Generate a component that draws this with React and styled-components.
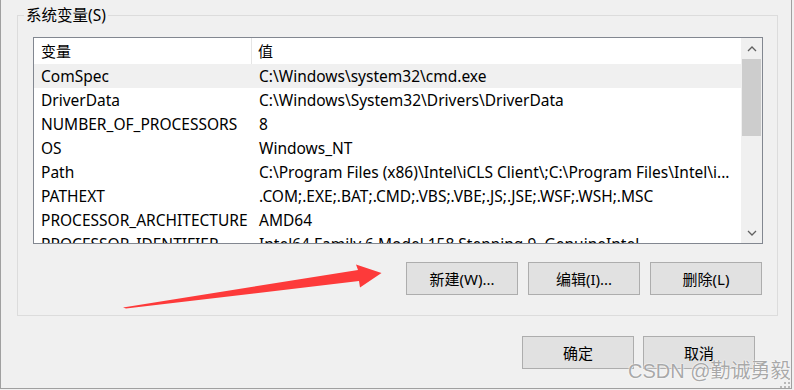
import React from 'react';
import styled, { createGlobalStyle } from 'styled-components';

const rows = [
  { name: 'ComSpec', value: 'C:\\Windows\\system32\\cmd.exe', hot: true },
  { name: 'DriverData', value: 'C:\\Windows\\System32\\Drivers\\DriverData' },
  { name: 'NUMBER_OF_PROCESSORS', value: '8' },
  { name: 'OS', value: 'Windows_NT' },
  { name: 'Path', value: 'C:\\Program Files (x86)\\Intel\\iCLS Client\\;C:\\Program Files\\Intel\\i...' },
  { name: 'PATHEXT', value: '.COM;.EXE;.BAT;.CMD;.VBS;.VBE;.JS;.JSE;.WSF;.WSH;.MSC' },
  { name: 'PROCESSOR_ARCHITECTURE', value: 'AMD64' },
  { name: 'PROCESSOR_IDENTIFIER', value: 'Intel64 Family 6 Model 158 Stepping 9, GenuineIntel' },
];

function App() {
  return (
    <>
      <GlobalStyle />
      <Window>
        <Group>
          <Legend>系统变量(S)</Legend>
          <ListBox>
            <ListContent>
              <HeaderRow>
                <HeaderCell divider>变量</HeaderCell>
                <HeaderCell>值</HeaderCell>
              </HeaderRow>
              {rows.map((r) => (
                <Row key={r.name} hot={r.hot}>
                  <Cell>{r.name}</Cell>
                  <Cell>{r.value}</Cell>
                </Row>
              ))}
            </ListContent>
            <ScrollBar>
              <ArrowBox>
                <svg width="10" height="6" viewBox="0 0 10 6">
                  <polyline points="1,5 5,1 9,5" fill="none" stroke="#606060" strokeWidth="1.3" />
                </svg>
              </ArrowBox>
              <Thumb />
              <Track />
              <ArrowBox>
                <svg width="10" height="6" viewBox="0 0 10 6">
                  <polyline points="1,1 5,5 9,1" fill="none" stroke="#606060" strokeWidth="1.3" />
                </svg>
              </ArrowBox>
            </ScrollBar>
          </ListBox>
          <ButtonRow>
            <Button>新建(W)...</Button>
            <Button>编辑(I)...</Button>
            <Button>删除(L)</Button>
          </ButtonRow>
        </Group>
        <DialogButtons>
          <Button>确定</Button>
          <Button>取消</Button>
        </DialogButtons>

        {/* red annotation arrow drawn over the dialog */}
        <Arrow width="794" height="390" viewBox="0 0 794 390">
          <polygon points="123,307.5 358,270 356,264.5 381.5,273 360,287.5 359,281 126,308.5" fill="#fd3a3a" />
        </Arrow>
        <Watermark>CSDN @勤诚勇毅</Watermark>
        <Grip width="12" height="10" viewBox="0 0 12 10">
          <rect x="9" y="0" width="2" height="2" fill="#b8b8b8" />
          <rect x="5" y="4" width="2" height="2" fill="#b8b8b8" />
          <rect x="9" y="4" width="2" height="2" fill="#b8b8b8" />
          <rect x="1" y="8" width="2" height="2" fill="#b8b8b8" />
          <rect x="5" y="8" width="2" height="2" fill="#b8b8b8" />
          <rect x="9" y="8" width="2" height="2" fill="#b8b8b8" />
        </Grip>
      </Window>
    </>
  );
}

const GlobalStyle = createGlobalStyle`
  html, body {
    margin: 0;
    padding: 0;
    background: #f0f0f0;
  }
  body {
    font-family: "Noto Sans", "Noto Sans CJK SC", sans-serif;
    font-size: 15px;
    color: #000;
  }
`;

const Window = styled.div`
  position: relative;
  box-sizing: border-box;
  width: 792px;
  height: 389px;
  padding: 5px 0 0 16px;
  background: #f0f0f0;
  border-left: 1px solid #a0a0a0;
  border-right: 1px solid #a0a0a0;
  border-bottom: 1px solid #a0a0a0;
  overflow: hidden;
`;

const Group = styled.fieldset`
  box-sizing: border-box;
  width: 761px;
  margin: 0;
  padding: 12px 14px 20px 15px;
  border: 1px solid #dcdcdc;
  min-width: 0;
`;

const Legend = styled.legend`
  margin-left: -9px;
  padding: 0 2px;
  line-height: 20px;
  font-size: 15.5px;
`;

const ListBox = styled.div`
  display: flex;
  box-sizing: border-box;
  width: 730px;
  height: 207px;
  border: 1px solid #828790;
  background: #fff;
  overflow: hidden;
`;

const ListContent = styled.div`
  flex: 1;
  min-width: 0;
  overflow: hidden;
  font-size: 15.5px;
`;

const HeaderRow = styled.div`
  display: grid;
  grid-template-columns: 218px 1fr;
  height: 26px;
`;

const HeaderCell = styled.div`
  display: flex;
  align-items: center;
  padding-left: ${(p) => (p.divider ? '7px' : '6px')};
  border-right: ${(p) => (p.divider ? '1px solid #e5e5e5' : 'none')};
  line-height: 20px;
  font-size: 15px;
`;

const Row = styled.div`
  display: grid;
  grid-template-columns: 218px 1fr;
  height: 24px;
  align-items: center;
  background: ${(p) => (p.hot ? '#f0f0f0' : '#fff')};
`;

const Cell = styled.div`
  padding-left: 7px;
  white-space: nowrap;
  overflow: hidden;
  line-height: 20px;
`;

const ScrollBar = styled.div`
  display: flex;
  flex-direction: column;
  width: 21px;
  background: #f0f0f0;
`;

const ArrowBox = styled.div`
  display: flex;
  align-items: center;
  justify-content: center;
  height: 21px;
`;

const Thumb = styled.div`
  height: 77px;
  margin: 0 1px;
  background: #cdcdcd;
`;

const Track = styled.div`
  flex: 1;
`;

const ButtonRow = styled.div`
  display: flex;
  justify-content: flex-end;
  gap: 10px;
  width: 729px;
  margin-top: 18px;
`;

const DialogButtons = styled.div`
  display: flex;
  justify-content: flex-end;
  gap: 9px;
  width: 738px;
  margin-top: 20px;
`;

const Button = styled.div`
  box-sizing: border-box;
  display: flex;
  align-items: center;
  justify-content: center;
  width: 112px;
  height: 33px;
  background: #e1e1e1;
  border: 1px solid #adadad;
  font-size: 15px;
  line-height: 20px;
`;

const Arrow = styled.svg`
  position: absolute;
  left: -1px;
  top: 0;
  pointer-events: none;
`;

const Watermark = styled.div`
  position: absolute;
  left: 627px;
  top: 360px;
  font-family: "Liberation Sans", "Noto Sans CJK SC", sans-serif;
  font-size: 20px;
  line-height: 22px;
  color: rgba(140, 140, 140, 0.75);
  text-shadow: 0 0 1px #fff, 0 0 2px #fff;
  white-space: nowrap;
`;

const Grip = styled.svg`
  position: absolute;
  right: 0;
  bottom: 0;
`;

export default App;
